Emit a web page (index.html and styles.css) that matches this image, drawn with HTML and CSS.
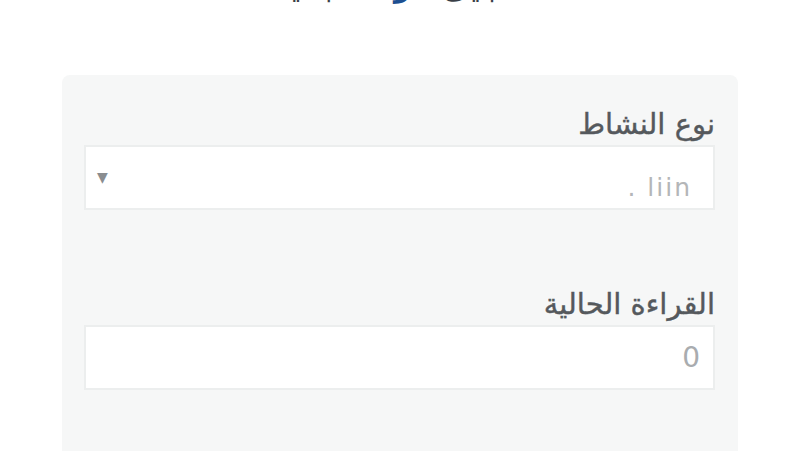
FILE: index.html
```html
<!DOCTYPE html>
<html lang="ar" dir="rtl">
<head>
<meta charset="utf-8">
<link rel="stylesheet" href="styles.css">
</head>
<body>
<div class="page">
  <h1 class="title">تسجيل <span class="accent">قراءة</span> جديدة</h1>
  <form class="card">
    <div class="field">
      <label class="label">نوع النشاط</label>
      <div class="select">
        <span class="placeholder" dir="ltr">. liin</span>
        <span class="arrow">▼</span>
      </div>
    </div>
    <div class="field">
      <label class="label">القراءة الحالية</label>
      <div class="input"><span class="value">0</span></div>
    </div>
  </form>
</div>
</body>
</html>
```
FILE: styles.css
```css
html, body {
  margin: 0;
  padding: 0;
  background: #ffffff;
  height: 451px;
  overflow: hidden;
}
.page {
  width: 800px;
  height: 451px;
  overflow: hidden;
  font-family: "DejaVu Sans", "Noto Sans", sans-serif;
}
.title {
  margin: -33px 0 0 0;
  height: 40px;
  text-align: center;
  font-size: 30px;
  line-height: 40px;
  color: #3a3f47;
  font-weight: bold;
}
.accent {
  color: #1d4f91;
}
.card {
  margin: 68px 62px 0 62px;
  background: #f6f7f7;
  border-radius: 8px;
  padding: 28px 23px 40px 22px;
  height: 420px;
  box-sizing: border-box;
}
.field {
  display: flex;
  flex-direction: column;
}
.field + .field {
  margin-top: 73px;
}
.label {
  font-size: 29px;
  line-height: 42px;
  color: #55595d;
  text-align: right;
  -webkit-text-stroke: 0.4px #55595d;
}
.select, .input {
  height: 65px;
  background: #ffffff;
  border: 2px solid #eceeee;
  box-sizing: border-box;
  display: flex;
  align-items: center;
  justify-content: space-between;
  padding: 0 13px 0 11px;
}
.placeholder {
  font-size: 25px;
  color: #b4b6b8;
  letter-spacing: 2px;
  padding-top: 20px;
  margin-right: 8px;
}
.arrow {
  font-size: 14px;
  color: #8a8d90;
  padding-bottom: 2px;
}
.value {
  font-size: 28px;
  color: #a9acaf;
}
```
